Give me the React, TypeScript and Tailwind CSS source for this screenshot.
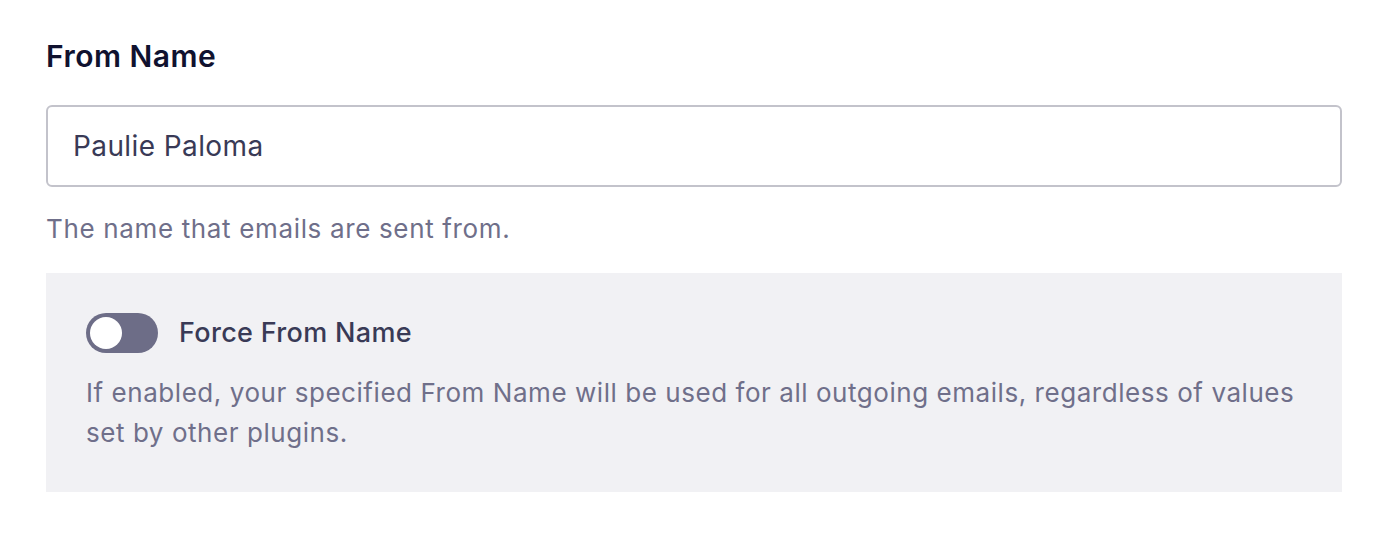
const App = () => {
  return (
    <div className="w-[1400px] h-[540px] bg-white font-['Inter',sans-serif]">
      <div className="pl-[46px] pr-[58px] pt-[36px]">
        <label className="block text-[30px] leading-[40px] font-semibold tracking-[0.5px] text-[#10122f]">
          From Name
        </label>

        <div className="mt-[29px] h-[82px] rounded-[6px] border-2 border-[#c3c3cb] bg-white px-[25px] flex items-center">
          <span className="text-[28px] tracking-[0.4px] text-[#393a56]">Paulie Paloma</span>
        </div>

        <p className="mt-[24px] text-[26px] leading-[36px] tracking-[0.65px] text-[#6f6f8a]">
          The name that emails are sent from.
        </p>

        <section className="mt-[26px] bg-[#f1f1f4] pl-[40px] pr-[30px] pt-[40px] pb-[39px]">
          <div className="flex items-center gap-[21px]">
            <div className="w-[72px] h-[40px] rounded-full bg-[#6d6d87] p-[4px] flex items-center">
              <span className="w-[32px] h-[32px] rounded-full bg-white" />
            </div>
            <span className="text-[27px] leading-[40px] font-medium tracking-[0.33px] text-[#393a56]">
              Force From Name
            </span>
          </div>
          <p className="mt-[20px] text-[26px] leading-[40px] tracking-[0.55px] text-[#6f6f8a]">
            If enabled, your specified From Name will be used for all outgoing
            emails, regardless of values
            <br />
            set by other plugins.
          </p>
        </section>
      </div>
    </div>
  );
};

export default App;
